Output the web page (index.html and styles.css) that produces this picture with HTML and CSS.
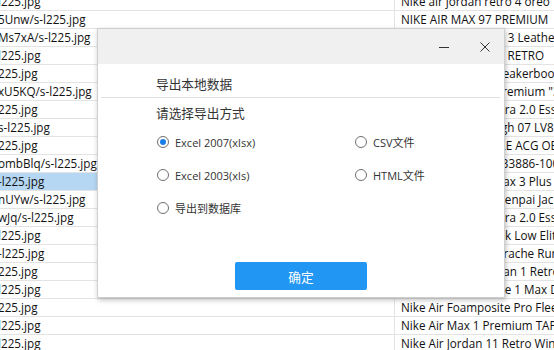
FILE: index.html
```html
<!DOCTYPE html>
<html lang="zh-CN">
<head>
    <meta charset="UTF-8">
    <title>导出本地数据</title>
    <link rel="stylesheet" href="styles.css">
</head>
<body>
    <div class="grid">
        <div class="row"><div class="cell url">l225.jpg</div><div class="cell name">Nike air jordan retro 4 oreo</div></div>
        <div class="row"><div class="cell url">5Unw/s-l225.jpg</div><div class="cell name">NIKE AIR MAX 97 PREMIUM</div></div>
        <div class="row"><div class="cell url">Ms7xA/s-l225.jpg</div><div class="cell name">Nike Air Max 1 Low 3 Leather Pack</div></div>
        <div class="row"><div class="cell url">l225.jpg</div><div class="cell name">NIKE AIR JORDAN 8 RETRO</div></div>
        <div class="row"><div class="cell url">225.jpg</div><div class="cell name">Nike Air Max 90 Sneakerboot</div></div>
        <div class="row"><div class="cell url">xU5KQ/s-l225.jpg</div><div class="cell name">Nike Air Jordan 1 Premium "3M"</div></div>
        <div class="row"><div class="cell url">225.jpg</div><div class="cell name">Nike Air Max 90 Ultra 2.0 Essential</div></div>
        <div class="row"><div class="cell url">s-l225.jpg</div><div class="cell name">Nike Air Force 1 High 07 LV8</div></div>
        <div class="row"><div class="cell url">225.jpg</div><div class="cell name">NIKE AIR FORCE 1 LE ACG OBSIDIAN</div></div>
        <div class="row"><div class="cell url">ombBlq/s-l225.jpg</div><div class="cell name">Nike Air Jordan 1 833886-100</div></div>
        <div class="row"><div class="cell url selected">-l225.jpg</div><div class="cell name">Nike Air Max 95 Triax 3 Plus</div></div>
        <div class="row"><div class="cell url">nUYw/s-l225.jpg</div><div class="cell name">Nike Air Max 1 SE Senpai Jackson</div></div>
        <div class="row"><div class="cell url">wJq/s-l225.jpg</div><div class="cell name">Nike Air Max 90 Ultra 2.0 Essential</div></div>
        <div class="row"><div class="cell url">l225.jpg</div><div class="cell name">Nike Air Max 1 Black Low Elite</div></div>
        <div class="row"><div class="cell url">-l225.jpg</div><div class="cell name">Nike Air Zoom Huarache Run</div></div>
        <div class="row"><div class="cell url">225.jpg</div><div class="cell name">Nike Air Zoom Jordan 1 Retro</div></div>
        <div class="row"><div class="cell url">l225.jpg</div><div class="cell name">Nike Air Zoom Force 1 Max Deluxe</div></div>
        <div class="row"><div class="cell url">225.jpg</div><div class="cell name">Nike Air Foamposite Pro Fleece</div></div>
        <div class="row"><div class="cell url">l225.jpg</div><div class="cell name">Nike Air Max 1 Premium TAPE</div></div>
        <div class="row"><div class="cell url">l225.jpg</div><div class="cell name">Nike Air Jordan 11 Retro Win Like 96</div></div>
    </div>

    <div class="dialog">
        <div class="titlebar">
            <svg class="tb-icon" width="12" height="12" viewBox="0 0 12 12"><path d="M1 6.5h10" stroke="#333" stroke-width="1"/></svg>
            <svg class="tb-icon close" width="12" height="12" viewBox="0 0 12 12"><path d="M1.5 1.5l9 9M10.5 1.5l-9 9" stroke="#333" stroke-width="1"/></svg>
        </div>
        <div class="content">
            <div class="heading">导出本地数据</div>
            <div class="sep"></div>
            <div class="subheading">请选择导出方式</div>
            <div class="options">
                <label class="option"><span class="radio checked"></span>Excel 2007(xlsx)</label>
                <label class="option"><span class="radio"></span>CSV文件</label>
                <label class="option"><span class="radio"></span>Excel 2003(xls)</label>
                <label class="option"><span class="radio"></span>HTML文件</label>
                <label class="option"><span class="radio"></span>导出到数据库</label>
            </div>
            <button class="ok-btn">确定</button>
        </div>
    </div>
</body>
</html>
```

FILE: styles.css
```css
body {
    margin: 0;
    width: 554px;
    height: 350px;
    overflow: hidden;
    background: #fff;
    font-family: "Open Sans", "Noto Sans CJK SC", sans-serif;
    font-size: 11.7px;
    color: #111;
}
.grid {
    margin-top: -7px;
}
.row {
    display: flex;
    height: 17px;
    border-bottom: 1px solid #e3e3e3;
}
.cell {
    line-height: 17px;
    white-space: nowrap;
    overflow: hidden;
}
.url {
    width: 396px;
    border-right: 1px solid #e3e3e3;
    margin-left: -2px;
}
.url.selected {
    background: #b5d7f3;
}
.name {
    flex: 1;
    padding-left: 6px;
}

/* dialog */
.dialog {
    position: absolute;
    left: 97px;
    top: 28px;
    width: 406px;
    height: 268px;
    border: 1px solid #cfcfcf;
    background: #fff;
    box-shadow: 1px 2px 5px rgba(0, 0, 0, 0.25);
    display: flex;
    flex-direction: column;
}
.titlebar {
    height: 35px;
    background: #f0f0f0;
    display: flex;
    justify-content: flex-end;
    align-items: center;
    gap: 29px;
    padding-right: 13px;
}
.tb-icon {
    display: block;
}
.content {
    flex: 1;
    display: flex;
    flex-direction: column;
    padding: 11px 0 7px 0;
    color: #333;
}
.heading, .subheading {
    font-size: 12.7px;
    line-height: 18px;
    padding-left: 58px;
}
.sep {
    height: 1px;
    background: #e0e0e0;
    margin: 4px 4px 6px 3px;
}
.options {
    display: grid;
    grid-template-columns: 198px 1fr;
    grid-auto-rows: 18px;
    row-gap: 15px;
    padding-left: 59px;
    margin-top: 11px;
}
.option {
    display: flex;
    align-items: center;
    gap: 6px;
    font-size: 11px;
    color: #333;
}
.radio {
    width: 10px;
    height: 10px;
    border: 1px solid #6f6f6f;
    border-radius: 50%;
    display: flex;
    align-items: center;
    justify-content: center;
    flex: none;
}
.radio.checked::after {
    content: "";
    width: 6px;
    height: 6px;
    border-radius: 50%;
    background: #1a7ee6;
}
.ok-btn {
    margin: auto auto 0 auto;
    width: 132px;
    height: 28px;
    border: none;
    border-radius: 2px;
    background: #2196f3;
    color: #fff;
    font-family: "Noto Sans CJK SC", sans-serif;
    font-size: 12.7px;
}
```
